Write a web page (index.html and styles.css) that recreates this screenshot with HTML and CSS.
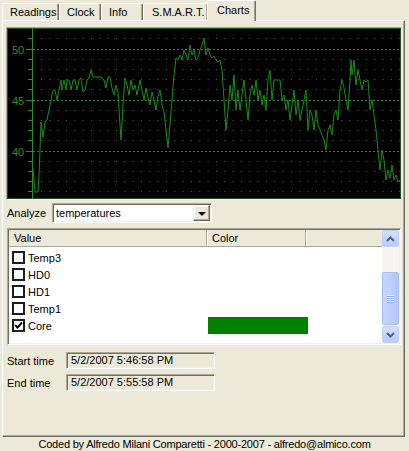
FILE: index.html
```html
<!DOCTYPE html>
<html lang="en">
<head>
  <meta charset="UTF-8" />
  <title>Charts</title>
  <link rel="stylesheet" href="styles.css">
</head>
<body>

  <div class="tabs">
    <div class="tab tab-readings">Readings</div>
    <div class="tab tab-clock">Clock</div>
    <div class="tab tab-info">Info</div>
    <div class="tab tab-smart">S.M.A.R.T.</div>
    <div class="tab tab-charts active">Charts</div>
  </div>

  <div class="panel">

    <div class="chart-frame">
      <svg class="chart" width="394" height="171" viewBox="7 28 394 171">
        <rect x="7.5" y="28.5" width="393" height="170" fill="#000" stroke="#1d4f1d" />
        <!-- dotted rows, one per degree -->
        <g stroke="#3d6e3d" stroke-dasharray="1 7.33">
          <line x1="41" y1="38.5" x2="400" y2="38.5" />
          <line x1="41" y1="59.5" x2="400" y2="59.5" />
          <line x1="41" y1="69.5" x2="400" y2="69.5" />
          <line x1="41" y1="79.5" x2="400" y2="79.5" />
          <line x1="41" y1="89.5" x2="400" y2="89.5" />
          <line x1="41" y1="110.5" x2="400" y2="110.5" />
          <line x1="41" y1="120.5" x2="400" y2="120.5" />
          <line x1="41" y1="130.5" x2="400" y2="130.5" />
          <line x1="41" y1="140.5" x2="400" y2="140.5" />
          <line x1="41" y1="161.5" x2="400" y2="161.5" />
          <line x1="41" y1="171.5" x2="400" y2="171.5" />
          <line x1="41" y1="181.5" x2="400" y2="181.5" />
          <line x1="41" y1="191.5" x2="400" y2="191.5" />
        </g>
        <!-- dashed grid at 50 / 45 / 40 -->
        <g stroke="#2f8a2f" stroke-dasharray="2 2">
          <line x1="33" y1="49.5" x2="400" y2="49.5" />
          <line x1="33" y1="100.5" x2="400" y2="100.5" />
          <line x1="33" y1="151.5" x2="400" y2="151.5" />
        </g>
        <!-- axis and ticks -->
        <g stroke="#2f8a2f">
          <line x1="32.5" y1="28" x2="32.5" y2="199" />
          <line x1="28" y1="38.5" x2="32" y2="38.5" />
          <line x1="26" y1="49.5" x2="32" y2="49.5" />
          <line x1="28" y1="59.5" x2="32" y2="59.5" />
          <line x1="28" y1="69.5" x2="32" y2="69.5" />
          <line x1="28" y1="79.5" x2="32" y2="79.5" />
          <line x1="28" y1="89.5" x2="32" y2="89.5" />
          <line x1="26" y1="100.5" x2="32" y2="100.5" />
          <line x1="28" y1="110.5" x2="32" y2="110.5" />
          <line x1="28" y1="120.5" x2="32" y2="120.5" />
          <line x1="28" y1="130.5" x2="32" y2="130.5" />
          <line x1="28" y1="140.5" x2="32" y2="140.5" />
          <line x1="26" y1="151.5" x2="32" y2="151.5" />
          <line x1="28" y1="161.5" x2="32" y2="161.5" />
          <line x1="28" y1="171.5" x2="32" y2="171.5" />
          <line x1="28" y1="181.5" x2="32" y2="181.5" />
          <line x1="28" y1="191.5" x2="32" y2="191.5" />
        </g>
        <g class="axis-label">
          <text x="12" y="53.5">50</text>
          <text x="12" y="104.5">45</text>
          <text x="12" y="155.5">40</text>
        </g>
        <polyline class="series" points="33,168 35,192 38,192 39,175 40,150 41,122 43,137 45,122 47,120 49,110 51,100 53,90 55,90 57,100 59,90 61,80 62,90 64,80 66,90 67,80 69,80 71,90 73,80 75,80 77,90 79,80 81,78 83,92 85,90 87,80 89,78 91,70 93,77 96,77 99,77 101,77 104,80 106,88 108,77 110,77 112,88 114,95 116,85 118,92 119,110 121,140 123,105 125,78 127,85 129,95 131,80 133,90 135,85 137,95 140,80 142,90 144,100 146,88 148,98 150,105 152,92 154,100 156,110 158,96 160,90 162,105 164,112 166,130 168,148 170,125 172,100 174,75 176,58 178,60 180,55 182,60 184,50 186,55 188,60 190,45 192,55 194,50 196,60 198,58 200,50 202,45 204,38 206,55 208,48 210,55 212,58 214,56 216,60 218,62 220,60 222,70 224,100 226,130 228,110 230,85 232,100 234,75 236,110 238,90 240,110 242,95 244,80 246,100 248,120 250,95 252,85 254,95 256,80 258,100 260,90 262,105 264,95 266,110 268,80 270,70 272,100 274,80 276,80 278,80 280,80 282,100 284,95 286,110 288,100 290,120 292,105 294,90 296,115 298,100 300,120 302,110 304,100 306,90 308,130 310,110 312,115 314,130 316,110 318,125 320,130 322,135 324,140 326,150 328,130 330,125 332,135 334,115 336,110 338,120 340,90 342,80 344,88 346,100 348,110 350,80 351,60 352,75 354,60 356,85 358,70 360,80 362,90 364,80 366,82 368,80 370,110 372,100 374,115 376,130 378,150 380,170 382,150 384,160 386,180 388,170 390,178 392,165 394,180 396,175 398,182 400,180" />
      </svg>
    </div>

    <div class="analyze-row">
      <span class="analyze-label">Analyze</span>
      <div class="combo">
        <span class="combo-text">temperatures</span>
        <span class="combo-btn"><span class="combo-arrow"></span></span>
      </div>
    </div>

    <div class="listview">
      <div class="list-main">
        <div class="list-header">
          <div class="col col-value">Value</div>
          <div class="col col-color">Color</div>
          <div class="col col-rest"></div>
        </div>
        <div class="list-rows">
          <div class="list-row">
            <span class="cell-value"><span class="check"></span>Temp3</span>
          </div>
          <div class="list-row">
            <span class="cell-value"><span class="check"></span>HD0</span>
          </div>
          <div class="list-row">
            <span class="cell-value"><span class="check"></span>HD1</span>
          </div>
          <div class="list-row">
            <span class="cell-value"><span class="check"></span>Temp1</span>
          </div>
          <div class="list-row">
            <span class="cell-value">
              <span class="check">
                <svg width="9" height="9" viewBox="0 0 9 9"><path d="M1 4 L3.5 6.5 L8 1.5" fill="none" stroke="#000" stroke-width="2"/></svg>
              </span>Core
            </span>
            <span class="color-bar"></span>
          </div>
        </div>
      </div>
      <div class="scrollbar">
        <div class="sb-btn">
          <svg width="9" height="6" viewBox="0 0 9 6"><path d="M1 5 L4.5 1.5 L8 5" fill="none" stroke="#4d6185" stroke-width="2"/></svg>
        </div>
        <div class="sb-track">
          <div class="sb-thumb">
            <span class="grip"></span><span class="grip"></span><span class="grip"></span><span class="grip"></span>
          </div>
        </div>
        <div class="sb-btn">
          <svg width="9" height="6" viewBox="0 0 9 6"><path d="M1 1 L4.5 4.5 L8 1" fill="none" stroke="#4d6185" stroke-width="2"/></svg>
        </div>
      </div>
    </div>

    <div class="time-row first">
      <span class="time-label">Start time</span>
      <span class="time-field">5/2/2007 5:46:58 PM</span>
    </div>
    <div class="time-row">
      <span class="time-label">End time</span>
      <span class="time-field">5/2/2007 5:55:58 PM</span>
    </div>

  </div>

  <div class="footer">Coded by Alfredo Milani Comparetti - 2000-2007 - alfredo@almico.com</div>

</body>
</html>
```

FILE: styles.css
```css
body {
  margin: 0;
  width: 409px;
  height: 451px;
  overflow: hidden;
  background: #ece9d8;
  font-family: "Liberation Sans", Arial, sans-serif;
  font-size: 11px;
  color: #000;
}

/* tab strip */
.tabs {
  display: flex;
  align-items: flex-end;
  height: 20px;
  padding-left: 2px;
  position: relative;
  z-index: 1;
}

.tab {
  box-sizing: border-box;
  height: 17px;
  line-height: 16px;
  padding-left: 6px;
  border-top: 1px solid #fff;
  border-left: 1px solid #fff;
  border-right: 1px solid #716f64;
  box-shadow: inset -1px 0 #aca899;
  border-radius: 2px 2px 0 0;
  white-space: nowrap;
}

.tab-readings { width: 57px; padding-left: 7px; }
.tab-clock { width: 42px; padding-left: 7px; }
.tab-info { width: 42px; padding-left: 7px; }
.tab-smart { width: 65px; padding-left: 8px; }

.tab.active {
  width: 49px;
  height: 21px;
  margin-left: -1px;
  margin-bottom: -1px;
  padding-left: 9px;
  line-height: 19px;
  background: #ece9d8;
}

/* main tab page */
.panel {
  box-sizing: border-box;
  width: 403px;
  height: 417px;
  margin-left: 2px;
  padding: 0 0 0 3px;
  border-top: 1px solid #fff;
  border-left: 1px solid #fff;
  border-right: 1px solid #716f64;
  border-bottom: 1px solid #716f64;
  box-shadow: inset -1px -1px #aca899;
  display: flex;
  flex-direction: column;
}

.chart-frame {
  width: 394px;
  height: 171px;
  margin-top: 6px;
  border: 1px solid;
  border-color: #aca899 #fff #fff #aca899;
}

.chart {
  display: block;
}

.axis-label text {
  fill: #2f8f2f;
  font-family: "Liberation Sans", Arial, sans-serif;
  font-size: 11px;
}

.series {
  fill: none;
  stroke: #1b8c1b;
  stroke-width: 1;
}

/* analyze combo */
.analyze-row {
  display: flex;
  align-items: center;
  margin-top: 3px;
  height: 20px;
}

.analyze-label {
  width: 46px;
  padding-left: 1px;
  box-sizing: border-box;
}

.combo {
  box-sizing: border-box;
  width: 160px;
  height: 20px;
  display: flex;
  align-items: center;
  background: #fff;
  border: 1px solid;
  border-color: #aca899 #fff #fff #aca899;
  box-shadow: inset 1px 1px #716f64, inset -1px -1px #f1efe2;
}

.combo-text {
  flex: 1;
  padding-left: 3px;
}

.combo-btn {
  box-sizing: border-box;
  width: 17px;
  height: 16px;
  margin-right: 1px;
  background: #ece9d8;
  border: 1px solid;
  border-color: #f1efe2 #716f64 #716f64 #f1efe2;
  box-shadow: inset -1px -1px #aca899, inset 1px 1px #fff;
  display: flex;
  align-items: center;
  justify-content: center;
}

.combo-arrow {
  width: 0;
  height: 0;
  border-left: 4px solid transparent;
  border-right: 4px solid transparent;
  border-top: 4px solid #000;
  margin-top: 1px;
}

/* list view */
.listview {
  box-sizing: border-box;
  width: 394px;
  height: 117px;
  margin-top: 5px;
  margin-left: 1px;
  display: flex;
  background: #fff;
  border: 1px solid;
  border-color: #aca899 #fff #fff #aca899;
  box-shadow: inset 1px 1px #716f64, inset -1px -1px #f1efe2;
  padding: 1px;
}

.list-main {
  flex: 1;
  display: flex;
  flex-direction: column;
}

.list-header {
  display: flex;
  height: 17px;
  background: #ece9d8;
  border-bottom: 1px solid #aca899;
  box-sizing: border-box;
}

.col {
  box-sizing: border-box;
  line-height: 16px;
  padding-left: 5px;
  border-right: 1px solid #aca899;
  box-shadow: 1px 0 #fff;
}

.col-value { width: 198px; }
.col-color { width: 99px; }
.col-rest { flex: 1; border-right: none; box-shadow: none; }

.list-rows {
  padding-top: 2px;
}

.list-row {
  display: flex;
  align-items: center;
  height: 17px;
}

.cell-value {
  width: 198px;
  display: flex;
  align-items: center;
  padding-left: 3px;
  box-sizing: border-box;
}

.check {
  box-sizing: border-box;
  width: 13px;
  height: 13px;
  margin-right: 3px;
  border: 2px solid #1e1e1e;
  background: #fff;
  display: flex;
  align-items: center;
  justify-content: center;
}

.check svg {
  display: block;
}

.color-bar {
  width: 100px;
  height: 17px;
  margin-left: 1px;
  background: #008000;
}

/* xp style scrollbar */
.scrollbar {
  width: 17px;
  display: flex;
  flex-direction: column;
  background: #f6f5ef;
}

.sb-btn {
  box-sizing: border-box;
  height: 17px;
  background: linear-gradient(#d3e0fd, #b8cbf6);
  border: 1px solid #bfd0f8;
  border-radius: 2px;
  display: flex;
  align-items: center;
  justify-content: center;
}

.sb-btn svg {
  display: block;
}

.sb-track {
  flex: 1;
  padding-top: 25px;
  padding-bottom: 1px;
  display: flex;
  flex-direction: column;
}

.sb-thumb {
  box-sizing: border-box;
  flex: 1;
  background: linear-gradient(90deg, #c6d6fc, #bccffb 60%, #b1c6f7);
  border: 1px solid #a9bff2;
  border-radius: 2px;
  display: flex;
  flex-direction: column;
  align-items: center;
  justify-content: center;
  gap: 1px;
}

.grip {
  width: 7px;
  height: 1px;
  background: #eef4fe;
  box-shadow: 0 1px #8cb0f8;
}

/* start / end time */
.time-row {
  display: flex;
  align-items: center;
  margin-top: 5px;
  height: 17px;
}

.time-row.first {
  margin-top: 7px;
}

.time-label {
  width: 60px;
  padding-left: 1px;
  box-sizing: border-box;
}

.time-field {
  box-sizing: border-box;
  width: 149px;
  height: 17px;
  line-height: 14px;
  padding-left: 4px;
  border: 1px solid;
  border-color: #aca899 #fff #fff #aca899;
  box-shadow: inset 1px 1px #716f64, inset -1px -1px #f1efe2;
}

.footer {
  height: 14px;
  line-height: 14px;
  text-align: center;
  letter-spacing: -0.2px;
}
```
